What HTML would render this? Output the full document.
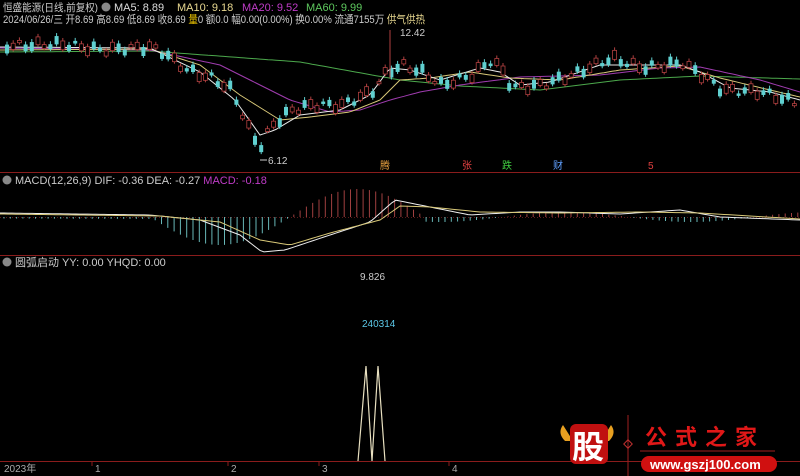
<!DOCTYPE html>
<html><head><meta charset="utf-8"><style>
body{margin:0;background:#000;width:800px;height:476px;overflow:hidden;font-family:"Liberation Sans","Noto Sans CJK SC",sans-serif}
svg{position:absolute;left:0;top:0}
</style></head><body>
<svg id="s" width="800" height="476" viewBox="0 0 800 476" font-family="Liberation Sans, Noto Sans CJK SC, sans-serif">
<line x1="0" y1="172.5" x2="800" y2="172.5" stroke="#8a1c1c"/>
<line x1="0" y1="255.5" x2="800" y2="255.5" stroke="#8a1c1c"/>
<line x1="0" y1="461.5" x2="800" y2="461.5" stroke="#8a1c1c"/>
<line x1="0" y1="217.5" x2="800" y2="217.5" stroke="#5a1a1a" stroke-dasharray="1,2"/>
<text x="3" y="11" font-size="10.5" fill="#ccc" textLength="95" lengthAdjust="spacingAndGlyphs">恒盛能源(日线,前复权)</text>
<circle cx="106" cy="7" r="4.5" fill="#888"/>
<text x="114" y="11" font-size="11" fill="#ddd">MA5: 8.89</text>
<text x="177" y="11" font-size="11" fill="#e8d890">MA10: 9.18</text>
<text x="242" y="11" font-size="11" fill="#c03cc8">MA20: 9.52</text>
<text x="306" y="11" font-size="11" fill="#5ec85e">MA60: 9.99</text>
<text x="3" y="23" font-size="11" fill="#ccc" textLength="422" lengthAdjust="spacingAndGlyphs">2024/06/26/三 开8.69 高8.69 低8.69 收8.69 <tspan fill="#e8c000">量</tspan>0 额0.0 幅0.00(0.00%) 换0.00% 流通7155万 <tspan fill="#e8d890">供气供热</tspan></text>
<text x="400" y="36" font-size="10" fill="#ccc">12.42</text>
<text x="268" y="164" font-size="10" fill="#ccc">6.12</text>
<line x1="260" y1="160" x2="267" y2="160" stroke="#ccc"/>
<text x="380" y="169" font-size="10" fill="#e8a040">腾</text>
<text x="462" y="169" font-size="10" fill="#e04040">张</text>
<text x="502" y="169" font-size="10" fill="#40d040">跌</text>
<text x="553" y="169" font-size="10" fill="#60a0ff">财</text>
<text x="648" y="169" font-size="10" fill="#e04040">5</text>
<circle cx="7" cy="180" r="4.5" fill="#888"/>
<text x="15" y="184" font-size="11" fill="#ccc">MACD(12,26,9) DIF: -0.36 DEA: -0.27 <tspan fill="#c03cc8">MACD: -0.18</tspan></text>
<circle cx="7" cy="262" r="4.5" fill="#888"/>
<text x="15" y="266" font-size="11" fill="#ccc">圆弧启动 YY: 0.00 YHQD: 0.00</text>
<text x="360" y="280" font-size="10" fill="#ccc">9.826</text>
<text x="362" y="327" font-size="10" fill="#5cc8e8">240314</text>
<polyline points="358,461 366,366 372,461 378,366 385,461" fill="none" stroke="#e8e0c0" stroke-width="1.2"/>
<g font-size="10" fill="#aaa">
<text x="4" y="472">2023年</text><text x="95" y="472">1</text><text x="231" y="472">2</text><text x="322" y="472">3</text><text x="452" y="472">4</text>
</g>
<g stroke="#8a1c1c"><line x1="92" y1="462" x2="92" y2="466"/><line x1="228" y1="462" x2="228" y2="466"/><line x1="319" y1="462" x2="319" y2="466"/><line x1="449" y1="462" x2="449" y2="466"/></g>
<g id="c"></g>
<path d="M563 425 q-6 8 2 16 l8 0 z M611 425 q6 8 -2 16 l-8 0 z" fill="#e8a020"/>
<rect x="570" y="424" width="38" height="40" rx="6" fill="#c01010"/>
<text x="572" y="458" font-size="32" font-weight="bold" fill="#fff">股</text>
<line x1="628" y1="415" x2="628" y2="476" stroke="#a02020"/>
<rect x="625" y="441" width="6" height="6" transform="rotate(45 628 444)" fill="none" stroke="#c03030"/>
<text x="645" y="445" font-size="22" font-weight="bold" fill="#e01818" letter-spacing="8">公式之家</text>
<line x1="640" y1="451" x2="775" y2="451" stroke="#a02020"/>
<rect x="641" y="456" width="136" height="16" rx="8" fill="#d01010"/>
<text x="650" y="469" font-size="13" font-weight="bold" fill="#fff">www.gszj100.com</text>
</svg>
<script>
var g=document.getElementById('c'),ns='http://www.w3.org/2000/svg';
function el(n,a){var e=document.createElementNS(ns,n);for(var k in a)e.setAttribute(k,a[k]);g.appendChild(e);return e}
function interp(p,x){for(var i=0;i<p.length-1;i++){if(x<=p[i+1][0]){var t=(x-p[i][0])/(p[i+1][0]-p[i][0]);return p[i][1]+t*(p[i+1][1]-p[i][1]);}}return p[p.length-1][1]}
function line(p,c){var s='';for(var x=0;x<=800;x+=4)s+=x+','+interp(p,x).toFixed(1)+' ';el('polyline',{points:s,fill:'none',stroke:c,'stroke-width':1})}
var price=[[0,46],[60,44],[100,50],[150,47],[165,55],[185,70],[210,78],[230,90],[245,125],[258,148],[270,125],[290,110],[310,105],[340,105],[370,92],[385,72],[400,65],[420,72],[440,85],[470,75],[490,60],[500,70],[510,88],[540,85],[570,75],[610,58],[640,68],[680,63],[700,75],[720,90],[760,92],[795,103]];
line([[0,52],[150,51],[300,62],[400,80],[460,86],[540,90],[620,80],[700,76],[800,79]],'#4ca84c');
line([[0,48],[150,50],[220,65],[290,100],[330,112],[360,110],[390,100],[420,92],[460,85],[520,77],[600,75],[660,68],[700,67],[760,80],[800,92]],'#a03cb0');
line([[0,50],[150,49],[200,65],[240,95],[280,120],[310,117],[350,112],[380,100],[400,80],[430,78],[470,72],[510,78],[560,80],[620,70],[680,66],[720,78],[770,90],[800,97]],'#d8c878');
line([[0,47],[150,48],[200,72],[235,100],[260,135],[275,130],[300,115],[340,110],[370,95],[390,68],[410,70],[440,80],[480,68],[500,72],[520,85],[550,82],[600,65],[640,65],[680,65],[700,72],[730,88],[770,92],[800,100]],'#e8e8e8');
for(var x=5;x<795;x+=6.2){var y=interp(price,x)+(Math.sin(x*1.7)*4);var h=2+Math.abs(Math.sin(x*0.9))*7;var up=Math.sin(x*2.3)>0;var c=up?'#b04040':'#60d0d0';
el('line',{x1:x+2,y1:y-h/2-3,x2:x+2,y2:y+h/2+2,stroke:c});
if(up)el('rect',{x:x,y:y-h/2,width:4,height:h,fill:'#000',stroke:c,'stroke-width':0.8});else el('rect',{x:x,y:y-h/2,width:4,height:h,fill:c});}
el('line',{x1:390,y1:30,x2:390,y2:78,stroke:'#b04040'});
for(var x=4;x<800;x+=6.3){var v;if(x<150)v=2*Math.sin(x);else if(x<290)v=-Math.sin((x-150)/140*Math.PI)*28;else if(x<425)v=Math.sin((x-290)/135*Math.PI)*28;else v=Math.sin(x/40)*5;
var c=v>0?'#a04040':'#68b8b8';el('line',{x1:x,y1:217,x2:x,y2:217-v,stroke:c})}
var dif=[[0,213],[150,215],[200,220],[240,235],[262,252],[285,250],[330,235],[370,222],[395,200],[420,205],[470,215],[520,212],[560,212],[620,214],[680,210],[720,217],[800,220]];
var dea=[[0,214],[160,216],[220,222],[260,240],[290,245],[330,233],[380,220],[400,206],[430,207],[480,212],[560,213],[640,212],[700,213],[800,219]];
var s='';for(var x=0;x<=800;x+=4)s+=x+','+interp(dif,x)+' ';el('polyline',{points:s,fill:'none',stroke:'#eee'});
s='';for(var x=0;x<=800;x+=4)s+=x+','+interp(dea,x)+' ';el('polyline',{points:s,fill:'none',stroke:'#d8c878'});
</script>
</body></html>
